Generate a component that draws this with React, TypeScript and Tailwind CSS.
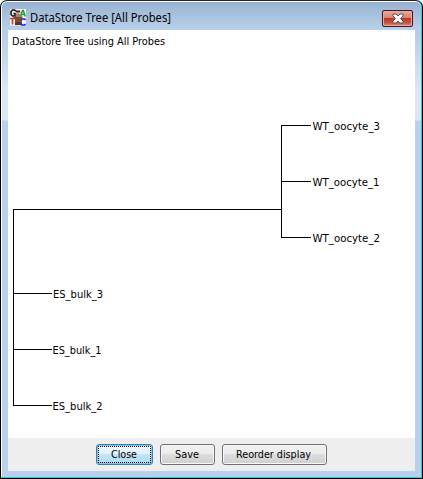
import React from "react";

type Leaf = { name: string; x: number; y: number; from: number; width: number };

const leaves: Leaf[] = [
  { name: "WT_oocyte_3", x: 304.5, y: 95, from: 273, width: 67.5 },
  { name: "WT_oocyte_1", x: 304.5, y: 151, from: 273, width: 67 },
  { name: "WT_oocyte_2", x: 304.5, y: 207, from: 273, width: 67.5 },
  { name: "ES_bulk_3", x: 45, y: 263, from: 5, width: 50 },
  { name: "ES_bulk_1", x: 44.5, y: 319, from: 5, width: 49 },
  { name: "ES_bulk_2", x: 44.5, y: 375, from: 5, width: 50 },
];

function AppIcon() {
  return (
    <svg width="16" height="17" viewBox="0 0 16 17" className="block shrink-0">
      <rect width="16" height="16.500" fill="#f8f4f0" />
      <path d="M6 2.200L4.500 1H2.500L1 2.500v3L2.500 7H5V4.500H3.500" fill="none" stroke="#111" strokeWidth="1.500" />
      <path d="M10.500 7.500l2-6h.8l2 6M11.500 5.500h3.500" fill="none" stroke="#16a03c" strokeWidth="1.500" />
      <path d="M0 9.500h5M2.500 9.500v6" fill="none" stroke="#e03528" strokeWidth="1.700" />
      <path d="M15.500 11l-1-1H12l-1 1.500v3l1 1.500h2.500l1-1" fill="none" stroke="#1c28e0" strokeWidth="1.600" />
      <path d="M3.500 7.500h9v2.500h-1.500v6H5v-6H3.500z" fill="#79502f" />
      <path d="M6 2.500h4.500v5.500H6z" fill="#a9806d" />
      <path d="M6 1.500h4v1.500H6z" fill="#392620" />
      <path d="M6.500 4h1v1h-1zM9 4h1v1H9z" fill="#eee" />
      <path d="M5 13h6v3H5z" fill="#593719" />
    </svg>
  );
}

function Tree() {
  return (
    <svg width="407" height="408" viewBox="0 0 407 408" className="block font-['DejaVu_Sans_Condensed','DejaVu_Sans',sans-serif] text-[11px] [font-stretch:condensed]">
      <text x="4" y="15" textLength="153" lengthAdjust="spacingAndGlyphs">DataStore Tree using All Probes</text>
      <g fill="#000" shapeRendering="crispEdges">
        <rect x="5" y="179" width="1" height="197" />
        <rect x="5" y="179" width="269" height="1" />
        <rect x="273" y="95" width="1" height="113" />
        {leaves.map((l) => (
          <rect key={l.name} x={l.from} y={l.y} width={(l.from === 5 ? 44 : 303) - l.from} height="1" />
        ))}
      </g>
      {leaves.map((l) => (
        <text key={l.name} x={l.x} y={l.y + 5} textLength={l.width} lengthAdjust="spacingAndGlyphs">{l.name}</text>
      ))}
    </svg>
  );
}

function Label({ text, width }: { text: string; width: number }) {
  return (
    <svg width={width} height="15" className="block overflow-visible font-['DejaVu_Sans_Condensed','DejaVu_Sans',sans-serif] text-[11px] [font-stretch:condensed]">
      <text x="-1" y="10" textLength={width} lengthAdjust="spacingAndGlyphs">{text}</text>
    </svg>
  );
}

export default function App() {
  return (
    <div className="h-[479px] w-[423px] bg-[linear-gradient(#ffffff_10px,#000000_11px)]">
      <div className="flex h-full w-full flex-col overflow-hidden rounded-t-[7px] border border-black border-t-[#25272c] bg-[#35c5e8]">
        <div className="mr-px mb-px flex min-h-0 flex-1 flex-col rounded-t-[6px] border-t border-l border-white bg-[linear-gradient(to_bottom,#98b4d3_0px,#b5cce6_28px,#dce7f4_88px,#dce7f4_118px,#b9d1ea_119px)]">
          <header className="flex h-7 shrink-0 items-start rounded-t-[6px] bg-gradient-to-b from-[#98b3d2] to-[#b9d0e9] pl-2">
            <div className="pt-[7px]"><AppIcon /></div>
            <svg width="150" height="22" className="mt-1 ml-1 block overflow-visible font-['Noto_Sans','Open_Sans',sans-serif] text-[12px]">
              <text x="0" y="16" textLength="141" lengthAdjust="spacingAndGlyphs">DataStore Tree [All Probes]</text>
            </svg>
            <button aria-label="Close window" className="mt-2 mr-2 ml-auto flex h-[17px] w-[31px] items-center justify-center rounded-[2px] border border-[#42151f] bg-[linear-gradient(#e8aa9f_0%,#d98372_45%,#bd3523_48%,#c54d39_75%,#dc8b78_100%)] shadow-[inset_0_0_0_1px_#e9aaa0]">
              <svg width="12" height="11" viewBox="0 0 12 11">
                <path d="M1 1h3l2 2 2-2h3v2L8.500 5.500 11 8v2H8L6 8l-2 2H1V8l2.500-2.500L1 3z" fill="#fff" stroke="#515767" />
              </svg>
            </button>
          </header>
          <main className="mr-[6px] ml-[6px] flex h-[441px] shrink-0 flex-col bg-white">
            <Tree />
            <footer className="flex h-[33px] gap-[7px] bg-[#eeeeee] pt-[6px] pl-[88px]">
              <button className="flex h-[21px] w-[57px] justify-center rounded-[3px] border border-[#3c7fb1] bg-[linear-gradient(#eef7fc_0%,#e0f1fa_48%,#c5e5f5_50%,#addaef_100%)] p-px shadow-[inset_0_0_0_1px_#79cce9]">
                <span className="flex h-[17px] w-[53px] justify-center border border-dotted border-black pt-px"><Label text="Close" width={26} /></span>
              </button>
              <button className="flex h-[21px] w-[55px] justify-center rounded-[3px] border border-[#707070] bg-[linear-gradient(#f2f2f2_0%,#ebebeb_48%,#dddddd_50%,#cfcfcf_100%)] pt-[3px] shadow-[inset_0_0_0_1px_#f8f8f8]">
                <Label text="Save" width={24} />
              </button>
              <button className="flex h-[21px] w-[105px] justify-center rounded-[3px] border border-[#707070] bg-[linear-gradient(#f2f2f2_0%,#ebebeb_48%,#dddddd_50%,#cfcfcf_100%)] pt-[3px] shadow-[inset_0_0_0_1px_#f8f8f8]">
                <Label text="Reorder display" width={75} />
              </button>
            </footer>
          </main>
        </div>
      </div>
    </div>
  );
}
